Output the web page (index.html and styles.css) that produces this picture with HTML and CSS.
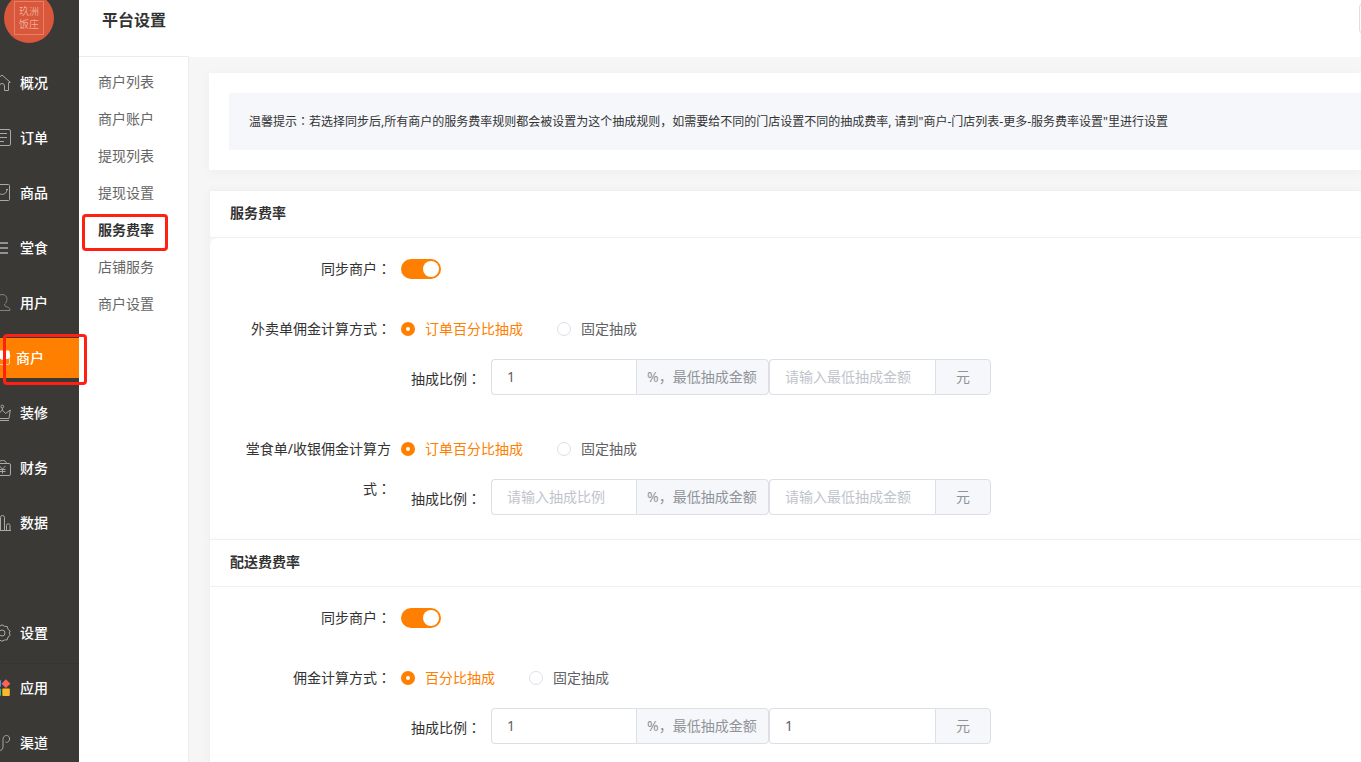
FILE: index.html
```html
<!DOCTYPE html>
<html lang="zh-CN">
<head>
<meta charset="utf-8">
<title>平台设置</title>
<link rel="stylesheet" href="styles.css">
</head>
<body>
<div class="shell">
  <nav class="sidebar" aria-label="主导航">
    <div class="brand">
      <div class="logo"><span class="logo-text">玖洲<br>饭庄</span></div>
    </div>
    <div class="nav-group">
      <a class="nav-item" href="#"><svg class="icon" viewBox="0 0 18 18"><path d="M1 8 9 1l8.300 7.300-1.800.4V16.500h-4V12a2.500 2.500 0 0 0-5 0v4.500h-4V8.700z"/></svg>概况</a>
      <a class="nav-item" href="#"><svg class="icon" viewBox="0 0 18 18"><rect x="1.500" y="0.500" width="16" height="16" rx="1.500"/><path d="M5 4.500h9M5 8.500h9M5 12.500h6"/></svg>订单</a>
      <a class="nav-item" href="#"><svg class="icon" viewBox="0 0 18 18"><rect x="1.500" y="0.500" width="15" height="16" rx="1"/><path d="M4.500 5.500c.5 6.500 9 6.500 9.500 0"/><path d="M13 5.500h2M3.500 5.500h2"/></svg>商品</a>
      <a class="nav-item" href="#"><svg class="icon icon-bold" viewBox="0 0 18 18"><path d="M3 4h12M3 9h12M3 14h12"/></svg>堂食</a>
      <a class="nav-item" href="#"><svg class="icon icon-dim" viewBox="0 0 18 18"><path d="M9 .5c3 0 5 2 5 4.700 0 2-1 3.800-2.200 4.700-.5 2 .2 2.600 2.200 3 2 .4 3 1.500 3 3.600H1c0-2.100 1-3.200 3-3.600s2.700-1 2.200-3C5 9 4 7.200 4 5.200 4 2.500 6 .5 9 .5z"/></svg>用户</a>
      <a class="nav-item is-active" href="#"><svg class="icon" viewBox="0 0 18 18"><path class="shop-body" d="M2.500 9v5a1.500 1.500 0 0 0 1.500 1.500h11a1.500 1.500 0 0 0 1.500-1.500V9"/><path class="shop-roof" d="M3 1.500h12.500a1 1 0 0 1 1 1l.8 5a3.500 3.500 0 0 1-5.300 2 3.500 3.500 0 0 1-5 0 3.500 3.500 0 0 1-5.500-2l.5-5a1 1 0 0 1 1-1z"/></svg>商户<span class="mark mark-nav"></span></a>
      <a class="nav-item" href="#"><svg class="icon" viewBox="0 0 18 18"><circle cx="9.300" cy="2.500" r="1.400"/><path d="M9.300 4v2l3.200 3.500L17.300 6l-1.300 8.500H3L1 6l5 3.500L9.300 6M3 16.500h13"/></svg>装修</a>
      <a class="nav-item" href="#"><svg class="icon" viewBox="0 0 18 18"><rect x="1" y="4.500" width="16.500" height="12" rx="1.500"/><path d="M5.500 4.500c0-4 8-4 8 0M6.500 7l3 3 3-3M9.500 10v4.500M6.500 10.500h6M6.500 12.500h6"/></svg>财务</a>
      <a class="nav-item" href="#"><svg class="icon" viewBox="0 0 18 18"><path d="M1.500 16.500V6.500a1.200 1.200 0 0 1 3 0v10M7.500 16.500v-13a2 2 0 0 1 4 0v13M13.500 16.500v-5a1.600 1.600 0 0 1 3.500 0v5M1 16.500h17"/></svg>数据</a>
    </div>
    <div class="nav-group nav-group-settings">
      <a class="nav-item" href="#"><svg class="icon" viewBox="0 0 18 18"><circle cx="9" cy="9" r="3"/><path d="m9 .8 2.500 1.500 2.800.2.700 2.800 2.200 1.700-1 2 1 2.300-2.200 1.700-.7 2.800-2.800.2L9 17.200 6.500 16l-2.800-.2L3 13 .8 11.300l1-2.300-1-2L3 5.300l.7-2.800 2.800-.2z"/></svg>设置</a>
    </div>
    <div class="nav-group nav-group-apps">
      <a class="nav-item" href="#"><svg class="icon icon-apps" viewBox="0 0 18 18"><rect fill="#4c8df6" x="0" y="1" width="8" height="7" rx="1"/><path fill="#fc6355" d="m12.900.3 4.400 4.400-4.400 4.400-4.400-4.400z"/><rect fill="#30c27c" x="0" y="9.500" width="8" height="7.500" rx="1"/><rect fill="#fbb829" x="9.300" y="9.500" width="7.500" height="7.500" rx="1"/></svg>应用</a>
      <a class="nav-item" href="#"><svg class="icon" viewBox="0 0 18 18"><path d="M2 11c-1 4 1.500 5.500 4 5.500 3 0 4-1.500 4-4V5.500C10 0 17 .5 16.500 5c-.3 3-2.500 4-4 3"/></svg>渠道</a>
    </div>
  </nav>
  <div class="page">
    <header class="topbar">
      <h1 class="title">平台设置</h1>
      <button class="top-button" type="button" aria-label="更多"></button>
    </header>
    <div class="columns">
      <nav class="submenu" aria-label="商户">
        <a class="sub-item" href="#">商户列表</a>
        <a class="sub-item" href="#">商户账户</a>
        <a class="sub-item" href="#">提现列表</a>
        <a class="sub-item" href="#">提现设置</a>
        <a class="sub-item is-current" href="#">服务费率<span class="mark mark-sub"></span></a>
        <a class="sub-item" href="#">店铺服务</a>
        <a class="sub-item" href="#">商户设置</a>
      </nav>
      <main class="content">
        <section class="tip-card">
          <p class="tip">温馨提示<span class="punct" lang="zh-TW">：</span>若选择同步后,所有商户的服务费率规则都会被设置为这个抽成规则，如需要给不同的门店设置不同的抽成费率, 请到"商户-门店列表-更多-服务费率设置"里进行设置</p>
        </section>
        <section class="card">
          <h2 class="card-title">服务费率</h2>
          <form class="form form-rounded">
            <div class="row">
              <label class="row-label" for="sync1">同步商户<span class="punct" lang="zh-TW">：</span></label>
              <div class="line"><input class="switch" type="checkbox" role="switch" id="sync1" checked></div>
            </div>
            <div class="row" role="radiogroup" aria-labelledby="takeout">
              <span class="row-label" id="takeout">外卖单佣金计算方式<span class="punct" lang="zh-TW">：</span></span>
              <div class="controls">
                <div class="line radios">
                  <label class="radio"><input type="radio" name="takeout" checked><span>订单百分比抽成</span></label>
                  <label class="radio"><input type="radio" name="takeout"><span>固定抽成</span></label>
                </div>
                <div class="rate">
                  <label for="rate1">抽成比例<span class="punct" lang="zh-TW">：</span></label>
                  <div class="group"><input class="field field-rate" id="rate1" type="text" value="1" placeholder="请输入抽成比例"><span class="addon addon-rate">%，最低抽成金额</span></div>
                  <div class="group"><input class="field field-min" type="text" aria-label="最低抽成金额" placeholder="请输入最低抽成金额"><span class="addon addon-unit">元</span></div>
                </div>
              </div>
            </div>
            <div class="row" role="radiogroup" aria-labelledby="dinein">
              <span class="row-label" id="dinein">堂食单/收银佣金计算方式<span class="punct" lang="zh-TW">：</span></span>
              <div class="controls">
                <div class="line radios">
                  <label class="radio"><input type="radio" name="dinein" checked><span>订单百分比抽成</span></label>
                  <label class="radio"><input type="radio" name="dinein"><span>固定抽成</span></label>
                </div>
                <div class="rate">
                  <label for="rate2">抽成比例<span class="punct" lang="zh-TW">：</span></label>
                  <div class="group"><input class="field field-rate" id="rate2" type="text" placeholder="请输入抽成比例"><span class="addon addon-rate">%，最低抽成金额</span></div>
                  <div class="group"><input class="field field-min" type="text" aria-label="最低抽成金额" placeholder="请输入最低抽成金额"><span class="addon addon-unit">元</span></div>
                </div>
              </div>
            </div>
          </form>
        </section>
        <section class="card">
          <h2 class="card-title">配送费费率</h2>
          <form class="form">
            <div class="row">
              <label class="row-label" for="sync2">同步商户<span class="punct" lang="zh-TW">：</span></label>
              <div class="line"><input class="switch" type="checkbox" role="switch" id="sync2" checked></div>
            </div>
            <div class="row" role="radiogroup" aria-labelledby="delivery">
              <span class="row-label" id="delivery">佣金计算方式<span class="punct" lang="zh-TW">：</span></span>
              <div class="controls">
                <div class="line radios">
                  <label class="radio"><input type="radio" name="delivery" checked><span>百分比抽成</span></label>
                  <label class="radio"><input type="radio" name="delivery"><span>固定抽成</span></label>
                </div>
                <div class="rate">
                  <label for="rate3">抽成比例<span class="punct" lang="zh-TW">：</span></label>
                  <div class="group"><input class="field field-rate" id="rate3" type="text" value="1"><span class="addon addon-rate">%，最低抽成金额</span></div>
                  <div class="group"><input class="field field-min" type="text" aria-label="最低抽成金额" value="1"><span class="addon addon-unit">元</span></div>
                </div>
              </div>
            </div>
          </form>
        </section>
      </main>
    </div>
  </div>
</div>
</body>
</html>
```
FILE: styles.css
```css
* { box-sizing: border-box; }

body {
  margin: 0;
  font-family: "Noto Sans", "Noto Sans CJK SC", sans-serif;
  font-size: 14px;
  color: #333;
  background: #fff;
}

a { color: inherit; text-decoration: none; }

input, button { font: inherit; margin: 0; }

/* Centred full-width punctuation */
.punct { font-family: "Noto Sans", "Noto Sans CJK TC", sans-serif; }

.shell { display: flex; height: 100vh; overflow: hidden; }

/* Dark navigation */
.sidebar {
  position: relative;
  z-index: 1;
  flex: none;
  width: 79px;
  background: #3a3936;
  color: #fff;
}

.brand {
  display: flex;
  align-items: flex-end;
  height: 43px;
  margin-bottom: 20px;
  padding-left: 4px;
}

.logo {
  display: flex;
  flex: none;
  align-items: center;
  justify-content: center;
  width: 50px;
  height: 50px;
  border-radius: 50%;
  background: #d9573b;
}

.logo-text {
  padding: 3px 4px;
  border: 1px solid #e48169;
  font-size: 10px;
  font-weight: 300;
  line-height: 13px;
  color: #f8cdbf;
}

.nav-group { display: flex; flex-direction: column; gap: 15px; }
.nav-group-settings { margin-top: 70px; }
.nav-group-apps { margin-top: 10px; padding-top: 4px; border-top: 1px solid #353431; }

.nav-item {
  position: relative;
  display: flex;
  align-items: center;
  gap: 9px;
  height: 40px;
  font-weight: 500;
  line-height: 40px;
}

.nav-item.is-active { gap: 5px; background: #ff8000; }

.icon {
  flex: none;
  width: 18px;
  height: 18px;
  margin-left: -7px;
  fill: none;
  stroke: #aaa9a7;
  stroke-width: 1;
}

.icon-bold { stroke: #92918f; stroke-width: 2; }
.icon-dim { stroke: #83827f; }
.icon-apps { stroke: none; }
.shop-roof { fill: #fff; stroke: none; }
.shop-body { stroke: #ffc993; }

.mark {
  position: absolute;
  border: 3px solid #ff2013;
  border-radius: 4px;
}

.mark-nav { top: -4px; right: -8px; bottom: -7px; left: 3px; }
.mark-sub { top: 3px; right: 20px; bottom: -3px; left: 3px; }

/* Page frame */
.page { display: flex; flex: 1; flex-direction: column; min-width: 0; }

.topbar {
  display: flex;
  flex: none;
  align-items: flex-start;
  justify-content: space-between;
  height: 57px;
  padding: 3px 0 0 23px;
  overflow: hidden;
}

.title { margin: 0; font-size: 16px; line-height: 34px; }

.top-button {
  width: 60px;
  height: 31px;
  margin-right: -58px;
  border: 1px solid #dcdfe6;
  border-radius: 4px;
  background: #fff;
}

.columns { display: flex; flex: 1; min-height: 0; }

.submenu {
  flex: none;
  width: 110px;
  margin-top: -1px;
  padding-top: 6px;
  border-top: 1px solid #ececec;
  border-right: 1px solid #ececec;
  background: #fff;
  color: #666;
}

.sub-item {
  position: relative;
  display: block;
  height: 37px;
  padding-left: 19px;
  line-height: 37px;
}

.is-current { font-weight: 700; color: #333; }

.content {
  flex: 1;
  min-width: 0;
  padding: 16px 0 0 20px;
  overflow: hidden;
  background: #f6f6f6;
}

/* Cards */
.tip-card {
  margin-bottom: 20px;
  padding: 20px 0 20px 20px;
  background: #fff;
  box-shadow: 0 2px 12px rgba(0, 0, 0, 0.04);
}

.tip {
  margin: 0;
  padding: 20px;
  font-size: 12px;
  line-height: 17px;
  background: #f5f7fb;
}

.card {
  border-left: 1px solid #f1f1f1;
  box-shadow: 0 2px 12px rgba(0, 0, 0, 0.04);
}

.card-title {
  margin: 0;
  padding: 0 20px 2px;
  border-top: 1px solid #f0f0f0;
  border-bottom: 1px solid #f0f0f0;
  font-size: 14px;
  line-height: 44px;
  background: #fff;
}

/* Forms */
.form {
  display: flex;
  flex-direction: column;
  gap: 20px;
  padding: 11px 20px 20px 31px;
  background: #fff;
}

.form-rounded { border-radius: 8px 0 0 0; }
.row { display: flex; gap: 10px; line-height: 40px; }
.row + .row + .row { margin-top: 10px; }
.row-label { flex: none; width: 150px; text-align: right; }
.line { display: flex; align-items: center; height: 40px; }

.switch {
  appearance: none;
  width: 40px;
  height: 20px;
  padding: 2px;
  border-radius: 10px;
  background: #dcdfe6;
}

.switch::before {
  content: "";
  display: block;
  width: 16px;
  height: 16px;
  border-radius: 50%;
  background: #fff;
}

.switch:checked { background: #ff8000; }
.switch:checked::before { margin-left: auto; }

.radios { gap: 34px; }
.radio { display: flex; align-items: center; gap: 10px; color: #606266; }

.radio input {
  appearance: none;
  width: 14px;
  height: 14px;
  border: 1px solid #dcdfe6;
  border-radius: 50%;
  background: #fff;
}

.radio input:checked { border: 5px solid #ff8000; }
.radio input:checked + span { color: #ff8000; }

.rate { display: flex; height: 40px; margin-top: 10px; padding-left: 10px; }
.rate label { margin-right: 10px; }
.group { display: flex; height: 36px; }

.field {
  height: 36px;
  padding: 0 15px;
  border: 1px solid #dcdfe6;
  border-right: 0;
  border-radius: 4px 0 0 4px;
  background: #fff;
  color: #606266;
}

.field::placeholder { color: #c0c4cc; }
.field-rate { width: 145px; }
.field-min { width: 166px; }

.addon {
  padding: 0 10px;
  border: 1px solid #dcdfe6;
  border-radius: 0 4px 4px 0;
  line-height: 34px;
  white-space: nowrap;
  background: #f5f7fa;
  color: #909399;
}

.addon-rate { min-width: 133px; }
.addon-unit { padding: 0 20px; }
```
